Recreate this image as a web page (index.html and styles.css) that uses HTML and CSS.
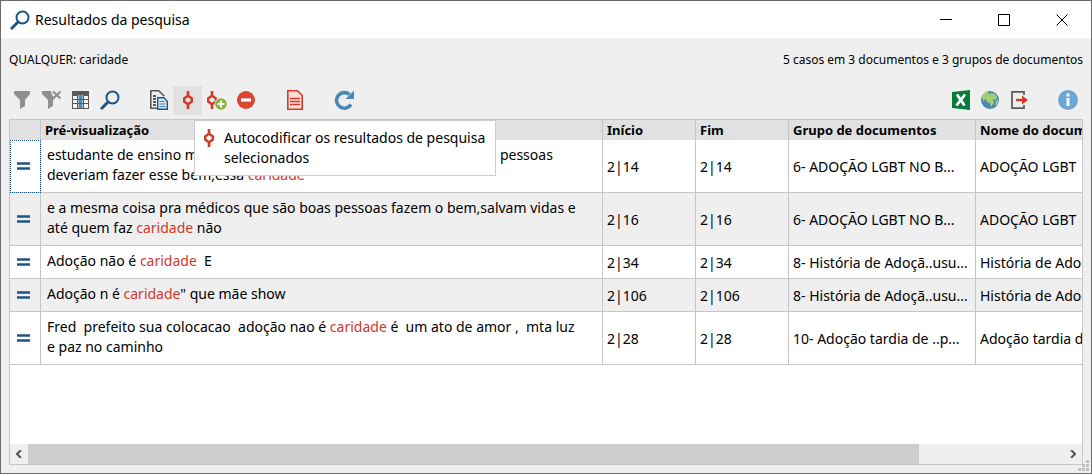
FILE: index.html
```html
<!DOCTYPE html>
<html lang="pt">
<head>
    <meta charset="UTF-8">
    <meta name="viewport" content="width=device-width, initial-scale=1.0">
    <title>Resultados da pesquisa</title>
    <link rel="stylesheet" href="styles.css">
</head>
<body>

    <!-- Shared icons -->
    <svg class="icon-defs" aria-hidden="true">
        <symbol id="icon-search" viewBox="0 0 20 20">
            <circle cx="12.5" cy="7.5" r="6" fill="none" stroke="#1f5582" stroke-width="2"/>
            <path d="M8 12L1 19" stroke="#1f5582" stroke-width="3"/>
        </symbol>
        <symbol id="icon-code" viewBox="0 0 20 20">
            <path d="M10 1v5M10 14v5" stroke="#d03a2b" stroke-width="2.6"/>
            <path d="M10 5.8L13.8 8.4v3.2L10 14.2 6.2 11.6V8.4z" fill="none" stroke="#d03a2b" stroke-width="2.4"/>
        </symbol>
        <symbol id="icon-equal" viewBox="0 0 14 8">
            <path d="M0 1.5h13M0 6.5h13" stroke="#1f5582" stroke-width="2.6"/>
        </symbol>
    </svg>

    <div class="window">
        <header class="titlebar">
            <svg class="icon"><use href="#icon-search"/></svg>
            <h1>Resultados da pesquisa</h1>
            <div class="window-buttons">
                <button type="button" aria-label="Minimizar"><svg viewBox="0 0 12 12"><path d="M0 5.5h12"/></svg></button>
                <button type="button" aria-label="Maximizar"><svg viewBox="0 0 12 12"><path d="M.5.5h11v11H.5z"/></svg></button>
                <button type="button" aria-label="Fechar"><svg viewBox="0 0 12 12"><path d="M.5.5l11 11M11.5.5l-11 11"/></svg></button>
            </div>
        </header>

        <div class="summary">
            <span>QUALQUER: caridade</span>
            <span>5 casos em 3 documentos e 3 grupos de documentos</span>
        </div>

        <div class="toolbar">
            <div class="tools">
                <button type="button" aria-label="Filtro">
                    <svg class="icon" viewBox="0 0 20 20"><path d="M1 1h16v3l-5 6v6l-5 3v-9L1 4z" fill="#8f8f8f"/></svg>
                </button>
                <button type="button" aria-label="Remover filtro">
                    <svg class="icon" viewBox="0 0 20 20"><path d="M0 1h9l1 4 3 3-2 2v6l-5 3v-9L0 4z" fill="#8f8f8f"/><path d="M11 1.500l7.500 7M18.500 1.500l-7.500 7" stroke="#8f8f8f" stroke-width="2.2"/></svg>
                </button>
                <button type="button" aria-label="Colunas">
                    <svg class="icon" viewBox="0 0 20 20"><path d="M1 1h17v18H1z" fill="#595959"/><path d="M2 6h4v3H2zM2 10h4v3H2zM2 14h4v4H2zM13 6h4v3h-4zM13 10h4v3h-4zM13 14h4v4h-4z" fill="#f4f4f4"/><path d="M7 5h5v13H7z" fill="#a9c5dc"/><path d="M8 5h3v13H8z" fill="#4b8dbd"/><path d="M7 9.500h5M7 13.500h5" stroke="#595959"/></svg>
                </button>
                <button type="button" aria-label="Pesquisar">
                    <svg class="icon"><use href="#icon-search"/></svg>
                </button>
            </div>
            <div class="tools">
                <button type="button" aria-label="Documentos">
                    <svg class="icon" viewBox="0 0 20 20"><path d="M9 18.200H1.800V.800h8l5.500 5.500" fill="none" stroke="#595959" stroke-width="1.6"/><path d="M4 6h3M4 9h3M4 12h3M4 15h3" stroke="#595959" stroke-width="1.8"/><path d="M8.700 7.700h6l3.600 3.500v8H8.700z" fill="#dceaf5" stroke="#1f5582" stroke-width="1.4"/><path d="M10.500 11.500h5M10.500 14h6M10.500 16.500h6" stroke="#3f80b4" stroke-width="1.2"/></svg>
                </button>
                <div class="tool-wrap">
                    <button type="button" class="active" aria-label="Autocodificar" aria-describedby="code-tip">
                        <svg class="icon"><use href="#icon-code"/></svg>
                    </button>
                    <div class="tooltip" id="code-tip" role="tooltip">
                        <svg class="icon"><use href="#icon-code"/></svg>
                        <span>Autocodificar os resultados de pesquisa selecionados</span>
                    </div>
                </div>
                <button type="button" aria-label="Autocodificar com novo código">
                    <svg class="icon" viewBox="0 0 20 20"><path d="M5 1v5M5 14v5" stroke="#d03a2b" stroke-width="2.6"/><path d="M5 5.8L8.800 8.4v3.2L5 14.2 1.200 11.6V8.4z" fill="none" stroke="#d03a2b" stroke-width="2.4"/><circle cx="14" cy="14" r="6.5" fill="#eee"/><circle cx="14" cy="14" r="5.8" fill="#87b53b"/><path d="M10.500 14h7M14 10.500v7" stroke="#fff" stroke-width="2"/></svg>
                </button>
                <button type="button" aria-label="Remover">
                    <svg class="icon" viewBox="0 0 20 20"><circle cx="10" cy="10" r="9" fill="#dc4433"/><path d="M5 10h10" stroke="#fff" stroke-width="3.2"/></svg>
                </button>
            </div>
            <div class="tools">
                <button type="button" aria-label="Relatório">
                    <svg class="icon" viewBox="0 0 20 20"><path d="M2.800.800h9.700l4.700 4.700v13.700H2.800z" fill="#f9dedb" stroke="#d8382b" stroke-width="1.6"/><path d="M5 8.500h10M5 11.500h10M5 14.500h10" stroke="#d8382b" stroke-width="1.5"/></svg>
                </button>
            </div>
            <div class="tools">
                <button type="button" aria-label="Atualizar">
                    <svg class="icon" viewBox="0 0 20 20"><path d="M15.500 4.500A7.800 7.800 0 1 0 17 14.500" fill="none" stroke="#4c88b6" stroke-width="3.6"/><path d="M20 .5v8.500h-8.500z" fill="#4c88b6"/></svg>
                </button>
            </div>
            <div class="tools export">
                <button type="button" aria-label="Exportar para Excel">
                    <svg class="icon" viewBox="0 0 20 20"><path d="M1 2l18-2v20L1 18z" fill="#087b3c"/><path d="M6 4.500l7.500 11M14 4.500L5.500 15.500" stroke="#fff" stroke-width="2.8"/></svg>
                </button>
                <button type="button" aria-label="Exportar para HTML">
                    <svg class="icon" viewBox="0 0 20 20"><circle cx="10" cy="10" r="9" fill="#4f86b5"/><path d="M2 7C3 3 6 1 8 1.500L9 4 7 6 6 9 3 11zM7 6l4-3 4 1 2 3-1 3-3-1 1 4-3 4-1-4-3-1-1-3z" fill="#a4d074"/><path d="M16 11l2-2v4l-3 3z" fill="#a4d074"/></svg>
                </button>
                <button type="button" aria-label="Exportar">
                    <svg class="icon" viewBox="0 0 20 20"><path d="M15 5V1.800H3v16.400h12V15" fill="none" stroke="#595959" stroke-width="1.7"/><path d="M7 10h7" stroke="#d8382b" stroke-width="2.4"/><path d="M13 5.500l6 4.500-6 4.500z" fill="#d8382b"/></svg>
                </button>
            </div>
            <div class="tools">
                <button type="button" aria-label="Informação">
                    <svg class="icon" viewBox="0 0 20 20"><circle cx="10" cy="10" r="10" fill="#6aa6d6"/><path d="M10 3.500v3M10 8v8" stroke="#fff" stroke-width="3"/></svg>
                </button>
            </div>
        </div>

        <div class="grid">
            <div class="grid-body">
                <table>
                    <colgroup>
                        <col class="col-mark">
                        <col class="col-preview">
                        <col class="col-pos">
                        <col class="col-pos">
                        <col class="col-group">
                        <col class="col-name">
                    </colgroup>
                    <thead>
                        <tr>
                            <th></th>
                            <th>Pré-visualização</th>
                            <th>Início</th>
                            <th>Fim</th>
                            <th>Grupo de documentos</th>
                            <th>Nome do documento</th>
                        </tr>
                    </thead>
                    <tbody>
                        <tr>
                            <td class="mark focused"><svg><use href="#icon-equal"/></svg></td>
                            <td class="preview">estudante de ensino m<span class="covered"></span>pessoas deveriam fazer esse bem,essa <em>caridade</em></td>
                            <td>2|14</td>
                            <td>2|14</td>
                            <td>6- ADOÇÃO LGBT NO B...</td>
                            <td>ADOÇÃO LGBT</td>
                        </tr>
                        <tr>
                            <td class="mark"><svg><use href="#icon-equal"/></svg></td>
                            <td class="preview">e a mesma coisa pra médicos que são boas pessoas fazem o bem,salvam vidas e até quem faz <em>caridade</em> não</td>
                            <td>2|16</td>
                            <td>2|16</td>
                            <td>6- ADOÇÃO LGBT NO B...</td>
                            <td>ADOÇÃO LGBT</td>
                        </tr>
                        <tr>
                            <td class="mark"><svg><use href="#icon-equal"/></svg></td>
                            <td class="preview">Adoção não é <em>caridade</em>  E</td>
                            <td>2|34</td>
                            <td>2|34</td>
                            <td>8- História de Adoçã..usu...</td>
                            <td>História de Adoção</td>
                        </tr>
                        <tr>
                            <td class="mark"><svg><use href="#icon-equal"/></svg></td>
                            <td class="preview">Adoção n é <em>caridade</em>" que mãe show</td>
                            <td>2|106</td>
                            <td>2|106</td>
                            <td>8- História de Adoçã..usu...</td>
                            <td>História de Adoção</td>
                        </tr>
                        <tr>
                            <td class="mark"><svg><use href="#icon-equal"/></svg></td>
                            <td class="preview">Fred  prefeito sua colocacao  adoção nao é <em>caridade</em> é  um ato de amor ,  mta luz e paz no caminho</td>
                            <td>2|28</td>
                            <td>2|28</td>
                            <td>10- Adoção tardia de ..p...</td>
                            <td>Adoção tardia de</td>
                        </tr>
                    </tbody>
                </table>
            </div>
            <div class="scrollbar">
                <button type="button" aria-label="Rolar para a esquerda"><svg viewBox="0 0 6 8"><path d="M5 0L1 4l4 4"/></svg></button>
                <div class="track"><div class="thumb"></div></div>
                <button type="button" aria-label="Rolar para a direita"><svg viewBox="0 0 6 8"><path d="M1 0l4 4-4 4"/></svg></button>
            </div>
        </div>

        <svg class="grip" viewBox="0 0 11 11"><path d="M8 0h3v3H8zM4 4h3v3H4zM8 4h3v3H8zM0 8h3v3H0zM4 8h3v3H4zM8 8h3v3H8z" fill="#bfbfbf"/></svg>
    </div>

</body>
</html>
```
FILE: styles.css
```css
* {
    box-sizing: border-box;
}

body {
    margin: 0;
    font-family: "Noto Sans", "Segoe UI", sans-serif;
    font-size: 14px;
    color: #000;
}

button {
    border: none;
    padding: 0;
    background: none;
    display: flex;
    align-items: center;
    justify-content: center;
}

svg {
    display: block;
    flex: none;
}

.icon-defs {
    display: none;
}

.icon {
    width: 20px;
    height: 20px;
}

.window {
    position: relative;
    display: flex;
    flex-direction: column;
    height: 100vh;
    background-color: #efefef;
    border: 1px solid #6b6b6b;
}

/* Title bar */
.titlebar {
    display: flex;
    align-items: center;
    gap: 5px;
    height: 37px;
    padding-left: 9px;
    background-color: #fff;
}

.titlebar h1 {
    margin: 0;
    font-size: 14px;
    font-weight: normal;
}

.window-buttons {
    display: flex;
    align-self: stretch;
    margin-left: auto;
}

.window-buttons button {
    width: 58px;
}

.window-buttons svg {
    width: 12px;
    height: 12px;
    fill: none;
    stroke: #000;
}

.summary {
    display: flex;
    justify-content: space-between;
    padding: 14px 8px;
    font-size: 12px;
    line-height: 16px;
}

/* Toolbar */
.toolbar {
    display: flex;
    gap: 20px;
    padding: 4px 9px 4px 7px;
}

.tools {
    display: flex;
}

.tools button {
    width: 29px;
    height: 29px;
    padding-bottom: 1px;
}

.tools button.active {
    background-color: #e1e1e1;
}

.export {
    margin-left: auto;
}

.tool-wrap {
    position: relative;
}

.tooltip {
    position: absolute;
    top: 34px;
    left: 21px;
    z-index: 1;
    display: flex;
    gap: 5px;
    width: 302px;
    padding: 7px 4px;
    background-color: #fff;
    border: 1px solid #ccc;
    line-height: 20px;
}

/* Results table */
.grid {
    flex: 1;
    display: flex;
    flex-direction: column;
    margin: 0 8px 8px;
    background-color: #fff;
    border: 1px solid #c6c6c6;
}

.grid-body {
    flex: 1;
    overflow: hidden;
}

table {
    width: 1206px;
    table-layout: fixed;
    border-collapse: separate;
    border-spacing: 0;
}

.col-mark {
    width: 31px;
}

.col-preview {
    width: 562px;
}

.col-pos {
    width: 93px;
}

.col-group {
    width: 187px;
}

.col-name {
    width: 240px;
}

th, td {
    padding: 0 4px;
    border-right: 1px solid #c6c6c6;
    text-align: left;
    white-space: nowrap;
}

th {
    height: 20px;
    background-color: #e1e1e1;
    font-size: 13px;
    line-height: 20px;
}

td {
    border-bottom: 1px solid #c6c6c6;
}

tbody tr:nth-child(even) {
    background-color: #efefef;
}

td.mark {
    padding: 0 7px;
}

td.focused {
    outline: 1px dotted #1f5582;
    outline-offset: -1px;
}

.mark svg {
    width: 14px;
    height: 8px;
}

td.preview {
    padding: 5px 18px 7px 6px;
    line-height: 20px;
    white-space: pre-wrap;
}

.preview em {
    color: #d03a2b;
    font-style: normal;
}

.covered {
    display: inline-block;
    width: 302px;
}

/* Horizontal scroll bar */
.scrollbar {
    display: flex;
    height: 20px;
    background-color: #efefef;
}

.scrollbar button {
    width: 18px;
}

.scrollbar svg {
    width: 6px;
    height: 8px;
    fill: none;
    stroke: #555;
    stroke-width: 2;
}

.track {
    flex: 1;
}

.thumb {
    width: 86%;
    height: 100%;
    background-color: #cdcdcd;
}

.grip {
    position: absolute;
    right: 2px;
    bottom: 2px;
    width: 11px;
    height: 11px;
}
```
